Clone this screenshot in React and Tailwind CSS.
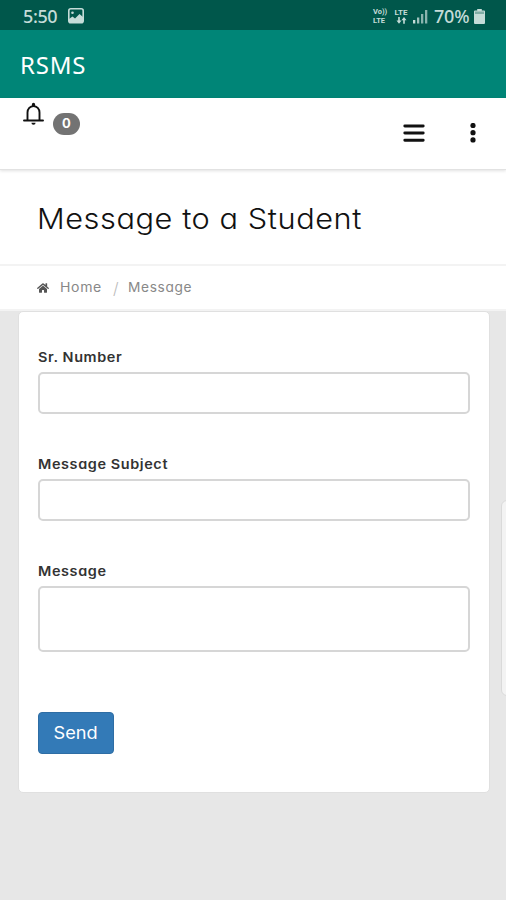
import { FaHome } from 'react-icons/fa';

const FIELDS = [
  { id: 'sr-number', label: 'Sr. Number' },
  { id: 'subject', label: 'Message Subject' },
  { id: 'message', label: 'Message', multiline: true },
];

const StatusBar = () => (
  <div className="flex h-[30px] shrink-0 items-center justify-between bg-[#00574b] pl-[23px] pr-[21px] pt-[2px] font-['Noto_Sans'] text-[#c5dcd8]">
    <div className="flex items-center">
      <span className="w-[45px] text-[18px] font-medium leading-none tracking-[-0.4px]">5:50</span>
      <svg width="16" height="16" viewBox="0 0 16 16">
        <rect x="0.8" y="0.8" width="14.4" height="13.9" rx="2" fill="none" stroke="currentColor" strokeWidth="1.6" />
        <path d="M1 11 4.500 8.500l2.500 2L11.500 6 15 9v5H1z" fill="currentColor" />
        <circle cx="4.500" cy="4.800" r="1.300" fill="currentColor" />
      </svg>
    </div>
    <div className="flex items-center">
      <div className="flex w-[17px] flex-col font-['Roboto'] text-[7.5px] font-bold leading-[9px]">
        <span>Vo))</span>
        <span>LTE</span>
      </div>
      <div className="ml-[3px] flex w-[16px] flex-col items-center font-['Roboto'] text-[8px] font-bold leading-[9px]">
        <span>LTE</span>
        <svg width="11" height="7" viewBox="0 0 11 7" className="mb-px">
          <path d="M2.200 0h1.600v3.500h1.700L3 6.700.500 3.500h1.700zM7.200 6.700h1.600V3.200h1.700L8 0 5.500 3.200h1.700z" fill="currentColor" />
        </svg>
      </div>
      <svg width="15" height="15" viewBox="0 0 15 15" className="ml-[4px]">
        <g fill="currentColor">
          <rect x="0" y="11" width="2.300" height="3.500" />
          <rect x="4" y="8.500" width="2.300" height="6" opacity="0.8" />
          <rect x="8" y="5" width="2.300" height="9.500" opacity="0.7" />
          <rect x="12" y="1" width="2.300" height="13.500" opacity="0.7" />
        </g>
      </svg>
      <span className="ml-[6px] w-[37px] whitespace-nowrap text-[18px] font-medium leading-none tracking-[-0.2px]">70%</span>
      <svg width="11" height="15" viewBox="0 0 11 15" className="ml-[3px]">
        <path d="M3.200 0h4.600v1.500H10a1 1 0 0 1 1 1V14a1 1 0 0 1-1 1H1a1 1 0 0 1-1-1V2.500a1 1 0 0 1 1-1h2.200z" fill="currentColor" />
        <rect x="1" y="2.500" width="9" height="2.500" fill="#00574b" opacity="0.35" />
      </svg>
    </div>
  </div>
);

const NavBar = () => (
  <div className="z-10 flex h-[72px] shrink-0 justify-between border-b border-[#e2e2e2] bg-white pl-[23px] pr-[29px] text-[#111] shadow-[0_1px_3px_rgba(0,0,0,0.12)]">
    <div className="flex">
      <svg width="21" height="25" viewBox="0 0 21 25" className="mt-[4px]">
        <path d="M4.500 18.500v-8a6 6.400 0 0 1 12 0v8" fill="none" stroke="currentColor" strokeWidth="1.900" />
        <path d="M1 18.500h19" stroke="currentColor" strokeWidth="1.900" strokeLinecap="round" />
        <path d="M8.900 4.500V2.300a1.600 1.600 0 0 1 3.200 0v2.200zM8.400 20.800h4.200a2.100 2 0 0 1-4.200 0z" fill="currentColor" />
      </svg>
      <span className="ml-[9px] mt-[15px] flex h-[22px] w-[27px] items-center justify-center rounded-full bg-[#737373] text-[13px] font-bold text-white">
        0
      </span>
    </div>
    <div className="mt-[24px] flex h-[21px] items-center gap-[44px]">
      <svg width="22" height="20" viewBox="0 0 22 20">
        <path d="M1.800 3h18.400M1.800 10h18.400M1.800 17.200h18.400" stroke="currentColor" strokeWidth="2.900" strokeLinecap="round" />
      </svg>
      <svg width="8" height="20" viewBox="0 0 8 20">
        <g fill="currentColor">
          <circle cx="4" cy="2.500" r="2.600" />
          <circle cx="4" cy="9.700" r="2.600" />
          <circle cx="4" cy="16.900" r="2.600" />
        </g>
      </svg>
    </div>
  </div>
);

const Field = ({ id, label, multiline }) => {
  const box = 'block w-full resize-none rounded-[5px] border-2 border-[#d6d6d6] bg-white px-3 outline-none';
  return (
    <div>
      <label
        htmlFor={id}
        className="mb-[5px] block h-[20px] origin-left scale-x-[1.11] text-[13px] font-semibold leading-[20px] tracking-[0.55px] text-[#333]"
      >
        {label}
      </label>
      {multiline ? (
        <textarea id={id} className={`${box} h-[66px]`} />
      ) : (
        <input id={id} type="text" className={`${box} h-[42px]`} />
      )}
    </div>
  );
};

const App = () => {
  return (
    <div className="relative flex h-[900px] w-[506px] flex-col overflow-hidden bg-[#e7e7e7] font-['Inter',sans-serif] [font-feature-settings:'cv11']">
      <StatusBar />

      <header className="flex h-[68px] shrink-0 items-center bg-[#008577] pl-[20px] pt-[2px] font-['Noto_Sans'] text-[24px] tracking-[0.8px] text-white">
        RSMS
      </header>

      <NavBar />

      {/* Page title */}
      <div className="flex h-[96px] shrink-0 items-center border-b-2 border-[#f3f3f3] bg-white pl-[37px] pt-[3px]">
        <h1 className="origin-left scale-x-[1.098] whitespace-nowrap text-[28px] font-light tracking-[0.5px] text-[#111]">
          Message to a Student
        </h1>
      </div>

      {/* Breadcrumb */}
      <nav className="flex h-[45px] shrink-0 items-center border-b-2 border-[#f3f3f3] bg-white pl-[37px] pt-px text-[13px] tracking-[0.6px] text-[#888]">
        <FaHome size={12} className="mr-[11px] text-[#555]" />
        <span className="w-[53px] origin-left scale-x-[1.08]">Home</span>
        <span className="w-[15px] text-[16px] font-light tracking-normal text-[#bbb]">/</span>
        <span className="origin-left scale-x-[1.055]">Message</span>
      </nav>

      {/* Form card */}
      <form className="ml-[18px] h-[482px] w-[472px] rounded-[5px] border border-[#e0e0e0] bg-white pl-[19px] pr-[19px] pt-[35px]">
        <div className="flex flex-col gap-[40px]">
          {FIELDS.map(field => (
            <Field key={field.id} {...field} />
          ))}
        </div>
        <button
          type="button"
          className="mt-[60px] h-[42px] w-[76px] rounded-[4px] border border-[#2e6da4] bg-[#337ab7] pt-[2px] text-[17px] text-white"
        >
          <span className="inline-block scale-x-[1.07]">Send</span>
        </button>
      </form>

      {/* Edge panel handle */}
      <div className="absolute left-[501px] top-[500px] h-[196px] w-[12px] rounded-[6px] border border-[#dadada] bg-[#f3f3f3]" />
    </div>
  );
};

export default App;
